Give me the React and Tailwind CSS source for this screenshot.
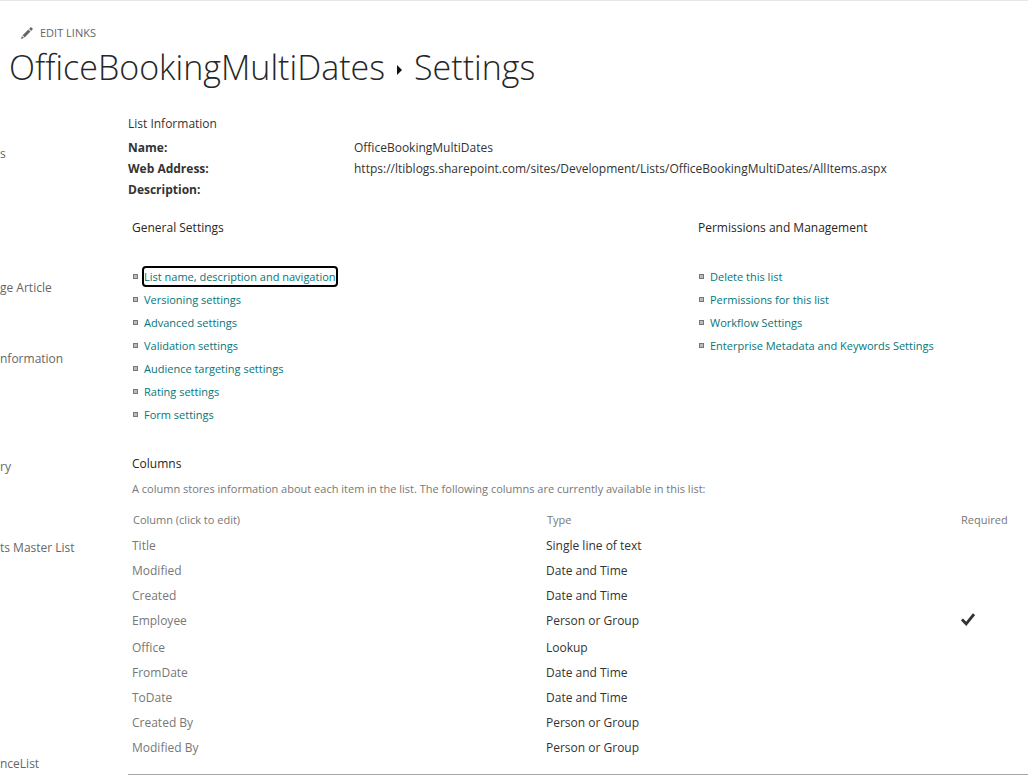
const NAV = [
  { label: 's', row: 'h-[134px]' },
  { label: 'ge Article', row: 'h-[71px]' },
  { label: 'nformation', row: 'h-[108px]' },
  { label: 'ry', row: 'h-[81px]' },
  { label: 'ts Master List', row: 'h-[216px]' },
  { label: 'nceList', row: 'h-[20px]' },
];

const GENERAL = [
  'List name, description and navigation',
  'Versioning settings',
  'Advanced settings',
  'Validation settings',
  'Audience targeting settings',
  'Rating settings',
  'Form settings',
];

const PERMISSIONS = [
  'Delete this list',
  'Permissions for this list',
  'Workflow Settings',
  'Enterprise Metadata and Keywords Settings',
];

const INFO = [
  ['Name:', 'OfficeBookingMultiDates'],
  ['Web Address:', 'https://ltiblogs.sharepoint.com/sites/Development/Lists/OfficeBookingMultiDates/AllItems.aspx'],
  ['Description:', ''],
];

const COLUMNS = [
  ['Title', 'Single line of text'],
  ['Modified', 'Date and Time'],
  ['Created', 'Date and Time'],
  ['Employee', 'Person or Group', true],
  ['Office', 'Lookup'],
  ['FromDate', 'Date and Time'],
  ['ToDate', 'Date and Time'],
  ['Created By', 'Person or Group'],
  ['Modified By', 'Person or Group'],
];

function Pencil() {
  return (
    <svg width="12" height="12" viewBox="0 0 12 12" fill="#666" aria-hidden="true">
      <path d="M0 12 .9 9 3 11.1Z" />
      <path d="M1.6 8.3 7.4 2.5 9.5 4.6 3.7 10.4Z" />
      <path d="M8.1 1.8 9.4.5Q10 0 10.5.5L11.5 1.5Q12 2 11.5 2.6L10.2 3.9Z" />
    </svg>
  );
}

function Check() {
  return (
    <svg className="mt-[5px] block" width="14" height="13" viewBox="0 0 14 13" fill="none" stroke="#333" strokeWidth="2.8" role="img" aria-label="Required">
      <path d="M1 6.4 5.2 10.8 13 1.2" />
    </svg>
  );
}

function LinkList({ title, items, focused }) {
  return (
    <section>
      <h2 className="leading-5 text-[#262626]">{title}</h2>
      <ul className="pt-[27px]">
        {items.map((item) => (
          <li key={item} className="flex h-[23px] items-center gap-[6px] pl-px">
            <span className="size-[5px] border border-[#777] bg-[#bbb]" />
            <a
              href="#"
              className={
                item === focused
                  ? 'whitespace-nowrap rounded-[2px] text-[11px] leading-[17px] text-[#04767a] outline-2 outline-black'
                  : 'whitespace-nowrap text-[11px] leading-[17px] text-[#04767a]'
              }
            >
              {item}
            </a>
          </li>
        ))}
      </ul>
    </section>
  );
}

export default function App() {
  return (
    <div className="border-t border-[#e6e6e6] bg-white font-['Open_Sans','Noto_Sans',sans-serif] text-[12px] text-[#333]">
      <header className="pt-[22px]">
        <a href="#" className="ml-[21px] flex h-5 w-fit items-center gap-[7px] text-[11px] text-[#666]">
          <Pencil />
          EDIT LINKS
        </a>
        <h1 className="flex h-12 items-center gap-3 pl-[9px] text-[34px] font-light text-[#262626]">
          <a href="#">OfficeBookingMultiDates</a>
          <svg className="mt-[6px]" width="5" height="10" viewBox="0 0 5 10" fill="#111" aria-hidden="true">
            <path d="M0 0 5 5 0 10Z" />
          </svg>
          <span>Settings</span>
        </h1>
      </header>

      <div className="flex pt-[23px]">
        <nav aria-label="Site" className="w-32 shrink-0 pt-[30px]">
          {NAV.map((n) => (
            <a key={n.label} href="#" className={`block whitespace-nowrap leading-5 text-[#666] ${n.row}`}>
              {n.label}
            </a>
          ))}
        </nav>

        <main className="min-w-0 flex-1">
          <h2 className="mb-[3px] leading-5">List Information</h2>
          <dl className="grid grid-cols-[226px_1fr] leading-[21px]">
            {INFO.map(([k, v]) => (
              <div key={k} className="contents">
                <dt className="font-bold">{k}</dt>
                <dd className="whitespace-nowrap">{v}</dd>
              </div>
            ))}
          </dl>

          <div className="grid grid-cols-[566fr_330fr] pl-1 pt-[18px]">
            <LinkList title="General Settings" items={GENERAL} focused={GENERAL[0]} />
            <LinkList title="Permissions and Management" items={PERMISSIONS} />
          </div>

          <section className="border-b border-[#a6a6a6] pb-[14px] pt-7">
            <h2 className="pl-1 leading-5 text-[#262626]">Columns</h2>
            <p className="pl-1 pt-[5px] text-[11px] leading-5 text-[#777]">
              A column stores information about each item in the list. The following columns are currently available in this list:
            </p>
            <table className="mt-2 w-full table-fixed text-left">
              <colgroup>
                <col className="w-[46%]" />
                <col className="w-[46%]" />
                <col />
              </colgroup>
              <thead>
                <tr className="h-[26px] text-[11px] text-[#777]">
                  <th className="pl-[5px] font-normal">Column (click to edit)</th>
                  <th className="pl-[5px] font-normal">Type</th>
                  <th className="pl-[5px] font-normal">Required</th>
                </tr>
              </thead>
              <tbody>
                {COLUMNS.map(([name, type, required]) => (
                  <tr key={name} className={required ? 'h-[27px] align-top leading-[25px]' : 'h-[25px] align-top leading-[25px]'}>
                    <td className="pl-1">
                      <a href="#" className="text-[#777]">{name}</a>
                    </td>
                    <td className="pl-1">{type}</td>
                    <td className="pl-[5px]">{required && <Check />}</td>
                  </tr>
                ))}
              </tbody>
            </table>
          </section>
        </main>
      </div>
    </div>
  );
}
